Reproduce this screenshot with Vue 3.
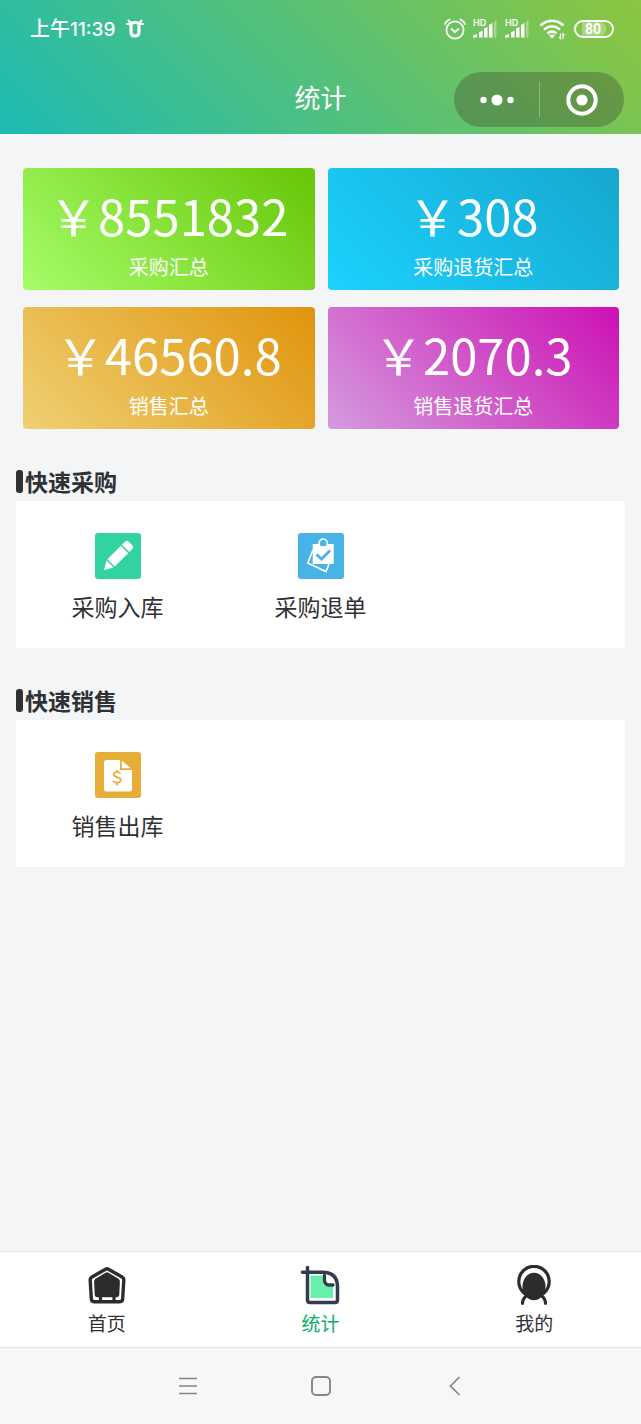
<script setup>
const summaries = [
  { amount: '￥8551832', label: '采购汇总', tone: 'green' },
  { amount: '￥308', label: '采购退货汇总', tone: 'blue' },
  { amount: '￥46560.8', label: '销售汇总', tone: 'orange' },
  { amount: '￥2070.3', label: '销售退货汇总', tone: 'purple' },
]
const sections = [
  {
    title: '快速采购',
    items: [
      { icon: 'pencil', label: '采购入库' },
      { icon: 'bag', label: '采购退单' },
    ],
  },
  { title: '快速销售', items: [{ icon: 'bill', label: '销售出库' }] },
]
const tabs = [
  { icon: 'home', label: '首页' },
  { icon: 'stats', label: '统计', active: true },
  { icon: 'me', label: '我的' },
]
</script>

<template>
  <div class="page">
    <header class="header">
      <div class="status">
        <span class="time">上午<span class="digits">11:39</span></span>
        <svg class="bug" width="20" height="20" viewBox="0 0 20 20" fill="none" stroke="#fff">
          <path d="M6 4.500Q10 2.500 14 4.500V13Q14 17 10 17T6 13z" stroke-width="3.200" stroke-linejoin="round" />
          <path d="M1 5h4M15 5h4M3 1l2.500 3M17 1l-2.500 3" stroke-width="2" />
        </svg>
        <div class="indicators">
          <svg width="22" height="22" viewBox="0 0 22 22" fill="none" stroke="#fff" stroke-linecap="round">
            <circle cx="11" cy="12" r="8.600" stroke-width="1.800" />
            <path d="M1 6q1-3 4.500-4.500M21 6q-1-3-4.500-4.500" stroke-width="1.800" />
            <path d="M7.500 11l3.500 3 3.500-3" stroke-width="1.800" />
          </svg>
          <span v-for="n in 2" :key="n" class="signal">
            <svg width="26" height="22" viewBox="0 0 26 22" fill="#fff">
              <path d="M1 19.500v-2l4-1.500v3.500zM7 19.500v-5l3.500-2v7zM12 19.500v-9l3.500-1.500v10.500zM17 19.500V7l3.500-2v14.500z" />
              <path d="M22 19.500V4l2.500-2v17.500z" opacity=".35" />
            </svg>
            <span class="hd">HD</span>
          </span>
          <svg class="wifi" width="27" height="22" viewBox="0 0 27 22" fill="none" stroke="#fff" stroke-width="2.600">
            <path d="M1.500 7.500Q13 -2 24.500 7.500M5 11.500Q13 5 21 11.500M8.500 15.500Q13 11.500 17.500 15.500" />
            <path d="M10 17.500Q13 15.500 16 17.500L13 20.500z" fill="#fff" stroke="none" />
            <path d="M21.500 15.500v5l-1.500-1.500M24 21v-5l1.500 1.500" stroke-width="1.200" />
          </svg>
          <span class="battery"><span>80</span></span>
        </div>
      </div>
      <div class="titlebar">
        <h1>统计</h1>
        <div class="capsule">
          <button type="button" aria-label="更多">
            <svg width="34" height="12" viewBox="0 0 34 12" fill="#fff">
              <circle cx="3.500" cy="6" r="3.200" /><circle cx="17" cy="6" r="5.500" /><circle cx="30.500" cy="6" r="3.200" />
            </svg>
          </button>
          <button type="button" aria-label="关闭">
            <svg width="32" height="32" viewBox="0 0 32 32">
              <circle cx="16" cy="16" r="13.700" fill="none" stroke="#fff" stroke-width="4" />
              <circle cx="16" cy="16" r="5.600" fill="#fff" />
            </svg>
          </button>
        </div>
      </div>
    </header>

    <main>
      <div class="cards">
        <div v-for="s in summaries" :key="s.label" class="card" :class="s.tone">
          <div class="amount">{{ s.amount }}</div>
          <div class="label">{{ s.label }}</div>
        </div>
      </div>

      <section v-for="sec in sections" :key="sec.title" class="section">
        <h2>{{ sec.title }}</h2>
        <div class="panel">
          <a v-for="i in sec.items" :key="i.label" href="#" class="entry">
            <svg v-if="i.icon === 'pencil'" width="46" height="46" viewBox="0 0 46 46">
              <rect width="46" height="46" rx="3" fill="#32d3a2" />
              <g transform="translate(9 37) rotate(-45)" fill="#fff">
                <path d="M0 0l8.500-5v10z" />
                <path d="M10 -5.200H29V5.200H10z" />
                <path d="M30.500 -5.200h4q3 0 3 3v4.400q0 3-3 3h-4z" />
              </g>
            </svg>
            <svg v-else-if="i.icon === 'bag'" width="46" height="46" viewBox="0 0 46 46">
              <rect width="46" height="46" rx="3" fill="#47b3e7" />
              <path d="M15 17L9.800 30 28 38.500 31 31" fill="none" stroke="#fff" stroke-width="1.700" />
              <path d="M14.700 11H35.700V31H14.700z" fill="#fff" />
              <circle cx="25.200" cy="10.200" r="4.200" fill="#47b3e7" stroke="#fff" stroke-width="1.700" />
              <path d="M21 13.200h8.500v1.500H21z" fill="#fff" />
              <path d="M18.500 21.500l5 4.500 8.500-8.500" fill="none" stroke="#47b3e7" stroke-width="2.800" />
            </svg>
            <svg v-else width="46" height="46" viewBox="0 0 46 46">
              <rect width="46" height="46" rx="3" fill="#e6ad37" />
              <path d="M11.500 8H25v10h12v19q0 2.500-2.500 2.500h-23Q9 39.500 9 37V10.500Q9 8 11.500 8z" fill="#fff" />
              <path d="M26.800 8.500l9 7.800h-9z" fill="#fff" />
              <path d="M25.500 21.500q-1-1.500-3.500-1.500t-3.300 2.300c0 3.700 7 2 7 5.700 0 3-5.700 3.700-7.500.7M22 18v2.500M22 30v3.500" fill="none" stroke="#e6ad37" stroke-width="1.700" />
            </svg>
            <span>{{ i.label }}</span>
          </a>
        </div>
      </section>
    </main>

    <nav class="tabs">
      <a v-for="t in tabs" :key="t.label" href="#" :class="{ active: t.active }">
        <svg v-if="t.icon === 'home'" width="40" height="40" viewBox="0 0 40 40">
          <path d="M18.500 4.200Q20 3.300 21.500 4.200L35.500 12.300Q37 13.300 36.800 15L35.700 33.700Q35.500 36.700 33 36.700H7Q4.500 36.700 4.300 33.700L3.200 15Q3 13.300 4.500 12.300Z" fill="none" stroke="#2c2c2c" stroke-width="3.400" stroke-linejoin="round" />
          <path d="M18.500 7.800Q20 6.900 21.500 7.800L31.500 13.800Q33 14.800 32.900 16.500L32.300 29.500Q32.100 32.300 29.500 32.300H10.500Q7.900 32.300 7.700 29.500L7.100 16.500Q7 14.800 8.500 13.800Z" fill="#2c2c2c" />
          <path d="M13.500 31v5M27 31v5" stroke="#2c2c2c" stroke-width="3.200" />
        </svg>
        <svg v-else-if="t.icon === 'stats'" width="40" height="40" viewBox="0 0 40 40">
          <path d="M10.500 10.500h13v10h9.500v12.500H10.500z" fill="#66f0ac" />
          <path d="M2.500 7.300H22Q37.500 7.300 37.500 22V35Q37.500 37.500 35 37.500H10Q7.500 37.500 7.500 35V2.500" fill="none" stroke="#333c4f" stroke-width="3.500" stroke-linecap="round" />
          <path d="M24.500 10.500V15Q24.500 20 29.500 20H33" fill="none" stroke="#333c4f" stroke-width="3.300" stroke-linecap="round" />
        </svg>
        <svg v-else width="40" height="40" viewBox="0 0 40 40">
          <circle cx="20" cy="16.500" r="15.200" fill="none" stroke="#2c2c2c" stroke-width="3.200" />
          <ellipse cx="20" cy="21.500" rx="11.500" ry="13.800" fill="#2c2c2c" />
          <path d="M8.500 38.300Q8.500 33.500 13 30.500M31.500 38.300Q31.500 33.500 27 30.500" fill="none" stroke="#2c2c2c" stroke-width="3.200" stroke-linecap="round" />
        </svg>
        <span>{{ t.label }}</span>
      </a>
    </nav>

    <div class="system">
      <button type="button" aria-label="菜单">
        <svg width="20" height="20" viewBox="0 0 20 20" stroke="#858585" stroke-width="1.700"><path d="M1 2.500h18M1 10h18M1 17.500h18" /></svg>
      </button>
      <button type="button" aria-label="主屏幕">
        <svg width="20" height="20" viewBox="0 0 20 20" fill="none" stroke="#858585" stroke-width="1.900"><rect x="1" y="1" width="18" height="18" rx="4" /></svg>
      </button>
      <button type="button" aria-label="返回">
        <svg width="20" height="20" viewBox="0 0 20 20" fill="none" stroke="#858585" stroke-width="1.700"><path d="M15.500 1L6.500 10l9 9" /></svg>
      </button>
    </div>
  </div>
</template>

<style>
body {
  background: #f3f5f7;
}
</style>

<style scoped>
.page {
  min-height: 100vh;
  display: flex;
  flex-direction: column;
  background: #f3f5f7;
  color: #303133;
  font-family: "Noto Sans CJK SC", sans-serif;
}
button {
  border: 0;
  padding: 0;
  background: none;
}
svg {
  display: block;
}
a {
  color: inherit;
  text-decoration: none;
}
.header {
  background: linear-gradient(45deg, #1cbbb4, #8dc63f);
  color: #fff;
}
.status {
  display: flex;
  align-items: center;
  height: 58px;
  padding: 0 27px 0 30px;
}
.time {
  font-size: 20px;
  font-weight: 500;
  line-height: 30px;
}
.digits {
  font-family: Inter, sans-serif;
  font-size: 19px;
}
.bug {
  margin-left: 10px;
}
.indicators {
  display: flex;
  align-items: center;
  gap: 6px;
  margin-left: auto;
}
.signal {
  position: relative;
}
.hd {
  position: absolute;
  left: 1px;
  top: 0;
  font: 600 9px/9px Inter, sans-serif;
}
.wifi {
  margin-left: 3px;
}
.battery {
  box-sizing: border-box;
  width: 40px;
  height: 18px;
  margin-left: 2px;
  border: 2px solid #fff;
  border-radius: 9px;
  font: 700 14px/14px Roboto, sans-serif;
  display: flex;
  align-items: center;
  justify-content: center;
}
.battery span {
  padding: 0 5px 0 3px;
  border-radius: 0 6px 6px 0;
  background: rgba(255, 255, 255, 0.3);
}
.titlebar {
  display: grid;
  grid-template-columns: 1fr auto 1fr;
  align-items: center;
  padding: 14px 17px 7px;
}
h1 {
  grid-column: 2;
  margin: 0;
  font-size: 26px;
  line-height: 36px;
  padding-bottom: 6px;
  font-weight: 400;
}
.capsule {
  justify-self: end;
  display: flex;
  width: 170px;
  height: 55px;
  border-radius: 28px;
  background: rgba(65, 80, 50, 0.38);
}
.capsule button {
  flex: 1;
  display: grid;
  place-items: center;
}
.capsule button + button {
  position: relative;
}
.capsule button + button::before {
  content: "";
  position: absolute;
  left: 0;
  top: 10px;
  bottom: 10px;
  width: 1px;
  background: rgba(255, 255, 255, 0.3);
}
main {
  flex: 1;
}
.cards {
  display: grid;
  grid-template-columns: 1fr 1fr;
  gap: 17px 13px;
  padding: 34px 22px 0 23px;
}
.card {
  padding: 12px 0 8px;
  border-radius: 4px;
  color: #fff;
  text-align: center;
}
.green { background: linear-gradient(45deg, #a6fd6a, #66c606); }
.blue { background: linear-gradient(45deg, #1bd2ff, #17a7cd); }
.orange { background: linear-gradient(45deg, #efd073, #e0940c); }
.purple { background: linear-gradient(45deg, #d49bdd, #cd10b4); }
.amount {
  font-size: 49px;
  line-height: 70px;
}
.label {
  margin-top: 2px;
  font-size: 20px;
  line-height: 30px;
}
.section {
  padding: 35px 16px 0;
}
h2 {
  display: flex;
  align-items: center;
  gap: 2px;
  margin: 0 0 2px;
  font-size: 23px;
  line-height: 35px;
  font-weight: 700;
}
h2::before {
  content: "";
  width: 7px;
  height: 23px;
  border-radius: 3px;
  background: #303133;
}
.panel {
  display: grid;
  grid-template-columns: repeat(3, 1fr);
  background: #fff;
  padding: 32px 0 25px;
}
.entry {
  display: flex;
  flex-direction: column;
  align-items: center;
  gap: 10px;
  font-size: 23px;
  line-height: 34px;
}
.tabs {
  display: grid;
  grid-template-columns: repeat(3, 1fr);
  background: #fff;
  border-top: 1px solid #e4e5e7;
}
.tabs a {
  display: flex;
  flex-direction: column;
  align-items: center;
  padding: 13px 0 10px;
  gap: 4px;
  font-size: 19px;
  line-height: 28px;
}
.tabs .active {
  color: #0aae68;
}
.system {
  display: grid;
  grid-template-columns: repeat(3, 133px);
  justify-content: center;
  background: #f7f7f7;
  border-top: 1px solid #e2e2e2;
}
.system button {
  display: grid;
  place-items: center;
  height: 76px;
}
</style>
